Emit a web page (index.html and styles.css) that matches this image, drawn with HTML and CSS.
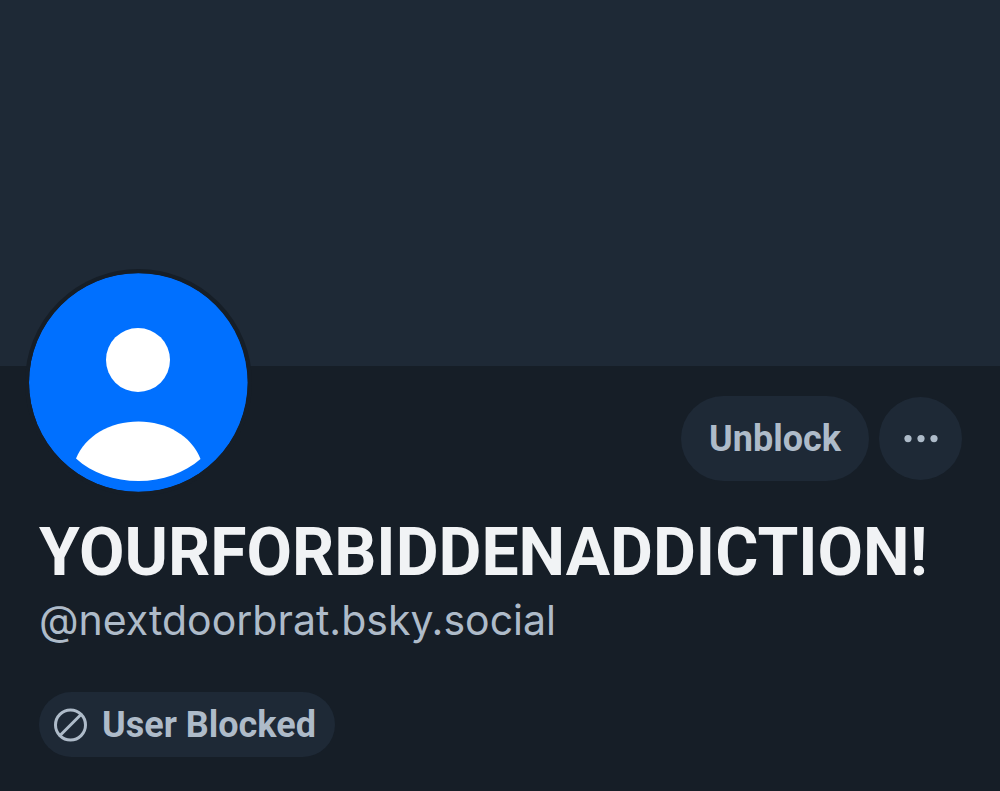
FILE: index.html
```html
<!DOCTYPE html>
<html lang="en">
<head>
    <meta charset="UTF-8">
    <meta name="viewport" content="width=device-width, initial-scale=1.0">
    <title>Profile</title>
    <link rel="stylesheet" href="styles.css">
</head>
<body>
    <main class="profile">
        <div class="banner"></div>

        <div class="profile-header">
            <svg class="avatar" viewBox="0 0 219 219" aria-hidden="true">
                <circle cx="109.3" cy="109.5" r="109.3" fill="#0070ff"/>
                <circle cx="109" cy="87" r="32" fill="#fff"/>
                <path d="M47 185.500C56 163 81 148.500 109.500 148.500s53 14.500 62 37.500c-16 14-38 22-62 22s-46.500-8-62.500-22.500z" fill="#fff"/>
            </svg>
            <div class="actions">
                <button class="unblock-button" type="button">Unblock</button>
                <button class="more-button" type="button" aria-label="More options">
                    <svg viewBox="0 0 34 8" aria-hidden="true">
                        <circle cx="4" cy="3.6" r="3.6"/>
                        <circle cx="17" cy="3.6" r="3.6"/>
                        <circle cx="30" cy="3.6" r="3.6"/>
                    </svg>
                </button>
            </div>
        </div>

        <div class="profile-info">
            <h1 class="display-name">YOURFORBIDDENADDICTION!</h1>
            <p class="handle">@nextdoorbrat.bsky.social</p>
            <button class="blocked-label" type="button">
                <svg viewBox="0 0 34 34" aria-hidden="true">
                    <circle cx="16.5" cy="17" r="15"/>
                    <path d="M6 27.5l21-21"/>
                </svg>
                User Blocked
            </button>
        </div>
    </main>
</body>
</html>
```
FILE: styles.css
```css
:root {
    --bg: #161e27;
    --surface: #1e2936;
    --text: #f1f3f5;
    --text-muted: #aebbc9;
}

* {
    margin: 0;
    padding: 0;
    box-sizing: border-box;
}

body {
    background-color: var(--bg);
    color: var(--text);
    font-family: Roboto, sans-serif;
    min-height: 100vh;
}

button {
    border: none;
    background-color: var(--surface);
    color: var(--text-muted);
    font-family: inherit;
    font-weight: 700;
    font-size: 36px;
    cursor: pointer;
}

.banner {
    height: 366px;
    background-color: var(--surface);
}

.profile-header {
    display: flex;
    justify-content: space-between;
    align-items: flex-start;
    padding: 0 38px 0 25px;
}

/* Avatar overlaps the banner */
.avatar {
    width: 227px;
    height: 227px;
    margin-top: -97px;
    border: 4px solid var(--bg);
    border-radius: 50%;
    background-color: var(--bg);
}

.actions {
    display: flex;
    align-items: center;
    gap: 10px;
    padding-top: 30px;
}

.unblock-button {
    height: 85px;
    padding: 0 28px;
    border-radius: 43px;
}

.more-button {
    display: flex;
    justify-content: center;
    align-items: center;
    width: 83px;
    height: 83px;
    border-radius: 50%;
}

.more-button svg {
    width: 34px;
    height: 8px;
    fill: var(--text-muted);
}

.profile-info {
    padding: 18px 39px 32px;
}

.display-name {
    font-size: 66px;
    font-weight: 700;
    line-height: 78px;
}

.handle {
    font-family: Inter, sans-serif;
    font-size: 41px;
    line-height: 56px;
    color: var(--text-muted);
}

.blocked-label {
    display: flex;
    align-items: center;
    gap: 14px;
    height: 65px;
    margin-top: 44px;
    padding: 0 19px 0 15px;
    border-radius: 33px;
}

.blocked-label svg {
    width: 34px;
    height: 34px;
    fill: none;
    stroke: var(--text-muted);
    stroke-width: 3;
    stroke-linecap: round;
}
```
